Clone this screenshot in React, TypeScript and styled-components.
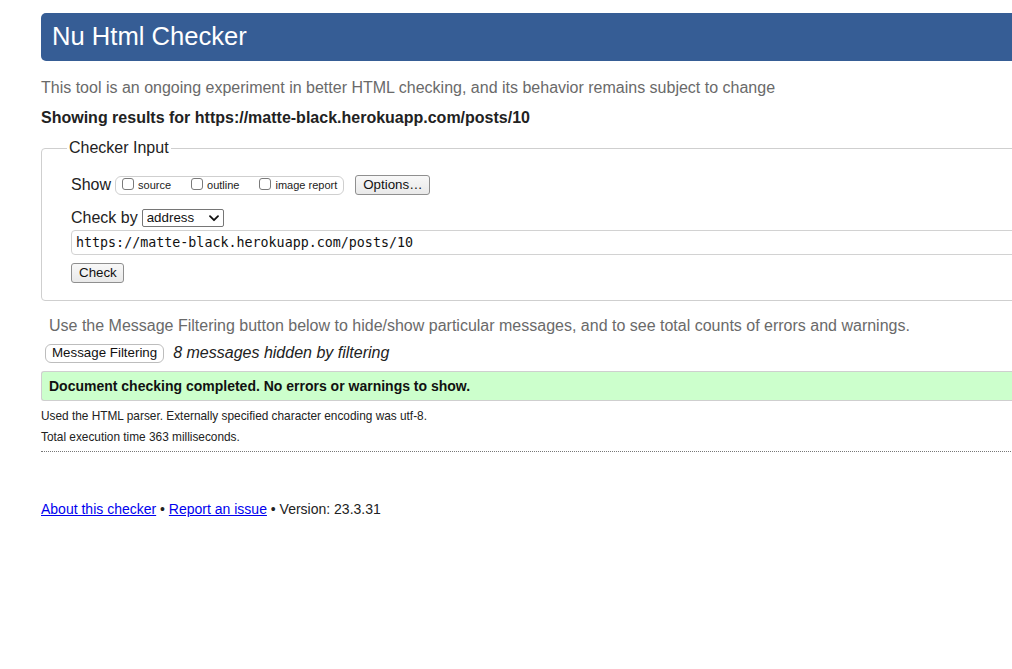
import React from "react";
import styled, { createGlobalStyle } from "styled-components";

const Global = createGlobalStyle`
  html, body { margin: 0; padding: 0; background: #fff; overflow: hidden; }
  body { font-family: "Liberation Sans", Arial, sans-serif; color: #222; }
`;

const Page = styled.div`
  width: 1160px;
  padding: 13px 0 40px 41px;
  box-sizing: content-box;
`;

const Header = styled.header`
  height: 48px;
  background: #365d95;
  border-radius: 5px 0 0 5px;
  display: flex;
  align-items: center;
  padding-left: 11px;
`;

const Title = styled.h1`
  margin: 0;
  font-size: 25.6px;
  font-weight: normal;
  color: #fff;
  line-height: 48px;
  position: relative;
  top: -1px;
`;

const Intro = styled.p`
  margin: 17px 0 0;
  font-size: 16px;
  line-height: 20px;
  color: #6a6a6a;
`;

const Showing = styled.p`
  margin: 10px 0 0;
  font-size: 16px;
  line-height: 20px;
  font-weight: bold;
  color: #222;
`;

const Fieldset = styled.fieldset`
  margin: 10px 0 0;
  border: 1px solid #cfcfcf;
  border-radius: 4px;
  padding: 0 0 17px 29px;
  min-width: 0;
`;

const Legend = styled.legend`
  font-size: 16px;
  line-height: 20px;
  padding: 0 2px;
  margin-left: -4px;
  color: #222;
`;

const Row = styled.div<{ $mt: number }>`
  display: flex;
  align-items: center;
  margin-top: ${(p) => p.$mt}px;
  font-size: 16px;
  line-height: 20px;
`;

const RowLabel = styled.span`
  margin-right: 4px;
  color: #222;
`;

const Group = styled.div`
  display: flex;
  align-items: center;
  gap: 20px;
  height: 17px;
  padding: 0 6px 0 6px;
  border: 1px solid #cfcfcf;
  border-radius: 6px;
`;

const CheckItem = styled.label`
  display: flex;
  align-items: center;
  font-size: 11px;
  line-height: 13px;
  color: #222;
`;

const Box = styled.input.attrs({ type: "checkbox" })`
  appearance: none;
  margin: 0 4px 0 0;
  width: 12px;
  height: 12px;
  border: 1px solid #7a7a7a;
  border-radius: 3px;
  background: #fff;
  box-sizing: border-box;
  position: relative;
  top: -1px;
`;

const Button = styled.button`
  font-family: "Liberation Sans", Arial, sans-serif;
  font-size: 13.33px;
  line-height: 16px;
  color: #111;
  background: linear-gradient(#f8f8f8, #e9e9e9);
  border: 1px solid #8f8f8f;
  border-radius: 3px;
  padding: 1px 7px;
  height: 20px;
  box-sizing: border-box;
  white-space: nowrap;
`;

const OptionsButton = styled(Button)`
  margin-left: 11px;
  width: 75px;
`;

const SelectWrap = styled.span`
  position: relative;
  display: inline-flex;
`;

const Select = styled.select`
  appearance: none;
  font-family: "Liberation Sans", Arial, sans-serif;
  font-size: 13.33px;
  width: 82px;
  height: 18px;
  padding: 0 0 0 4px;
  border: 1px solid #767676;
  border-radius: 2px;
  background: #fff;
  color: #111;
  line-height: 16px;
`;

const Chevron = styled.svg`
  position: absolute;
  right: 5px;
  top: 6px;
  pointer-events: none;
`;

const UrlInput = styled.input`
  display: block;
  margin-top: 2px;
  width: 1100px;
  height: 25px;
  box-sizing: border-box;
  border: 1px solid #d2d2d2;
  border-radius: 4px;
  padding: 0 4px;
  font-family: "DejaVu Sans Mono", monospace;
  font-size: 13.33px;
  color: #111;
  outline: none;
`;

const CheckButton = styled(Button)`
  display: block;
  margin-top: 8px;
  width: 53px;
`;

const Note = styled.p`
  margin: 15px 0 0 8px;
  font-size: 16px;
  line-height: 20px;
  color: #6a6a6a;
`;

const FilterRow = styled.div`
  display: flex;
  align-items: center;
  margin-top: 7px;
  margin-left: 4px;
  height: 20px;
`;

const FilterButton = styled.button`
  font-family: "Liberation Sans", Arial, sans-serif;
  font-size: 13.33px;
  line-height: 16px;
  color: #111;
  background: #fff;
  border: 1px solid #bdbdbd;
  border-radius: 6px;
  height: 19px;
  padding: 0 6px;
  white-space: nowrap;
  box-sizing: border-box;
`;

const Hidden = styled.em`
  margin-left: 9px;
  font-size: 16px;
  line-height: 20px;
  color: #222;
`;

const Success = styled.div`
  margin-top: 8px;
  height: 30px;
  box-sizing: border-box;
  background: #ccffcc;
  border: 1px solid #cfcfcf;
  border-right: none;
  border-radius: 3px 0 0 3px;
  padding-left: 7px;
  display: flex;
  align-items: center;
  font-size: 14px;
  font-weight: bold;
  color: #111;
`;

const Detail = styled.p<{ $mt: number }>`
  margin: ${(p) => p.$mt}px 0 0;
  font-size: 11.85px;
  line-height: 16px;
  color: #222;
`;

const Rule = styled.hr`
  margin: 6px 0 0;
  border: none;
  border-top: 1px dotted #777;
  height: 0;
`;

const Footer = styled.p`
  margin: 48px 0 0;
  font-size: 14px;
  line-height: 18px;
  color: #222;
`;

const Link = styled.a`
  color: #0000ee;
  text-decoration: underline;
`;

export default function App() {
  return (
    <>
      <Global />
      <Page>
        <Header>
          <Title>Nu Html Checker</Title>
        </Header>
        <Intro>
          This tool is an ongoing experiment in better HTML checking, and its behavior remains subject to change
        </Intro>
        <Showing>Showing results for https://matte-black.herokuapp.com/posts/10</Showing>
        <Fieldset>
          <Legend>Checker Input</Legend>
          <Row $mt={17}>
            <RowLabel>Show</RowLabel>
            <Group>
              <CheckItem>
                <Box />
                source
              </CheckItem>
              <CheckItem>
                <Box />
                outline
              </CheckItem>
              <CheckItem>
                <Box />
                image report
              </CheckItem>
            </Group>
            <OptionsButton>Options…</OptionsButton>
          </Row>
          <Row $mt={13}>
            <RowLabel>Check by</RowLabel>
            <SelectWrap>
              <Select defaultValue="address">
                <option value="address">address</option>
                <option value="file">file upload</option>
                <option value="text">text input</option>
              </Select>
              <Chevron width="10" height="7" viewBox="0 0 10 7">
                <path d="M1 1.2 L5 5.2 L9 1.2" fill="none" stroke="#111" strokeWidth="1.8" strokeLinecap="round" strokeLinejoin="round" />
              </Chevron>
            </SelectWrap>
          </Row>
          <UrlInput defaultValue="https://matte-black.herokuapp.com/posts/10" readOnly />
          <CheckButton>Check</CheckButton>
        </Fieldset>
        <Note>
          Use the Message Filtering button below to hide/show particular messages, and to see total counts of errors and warnings.
        </Note>
        <FilterRow>
          <FilterButton>Message Filtering</FilterButton>
          <Hidden>8 messages hidden by filtering</Hidden>
        </FilterRow>
        <Success>Document checking completed. No errors or warnings to show.</Success>
        <Detail $mt={7}>Used the HTML parser. Externally specified character encoding was utf-8.</Detail>
        <Detail $mt={5}>Total execution time 363 milliseconds.</Detail>
        <Rule />
        <Footer>
          <Link href="#">About this checker</Link> • <Link href="#">Report an issue</Link> • Version: 23.3.31
        </Footer>
      </Page>
    </>
  );
}
